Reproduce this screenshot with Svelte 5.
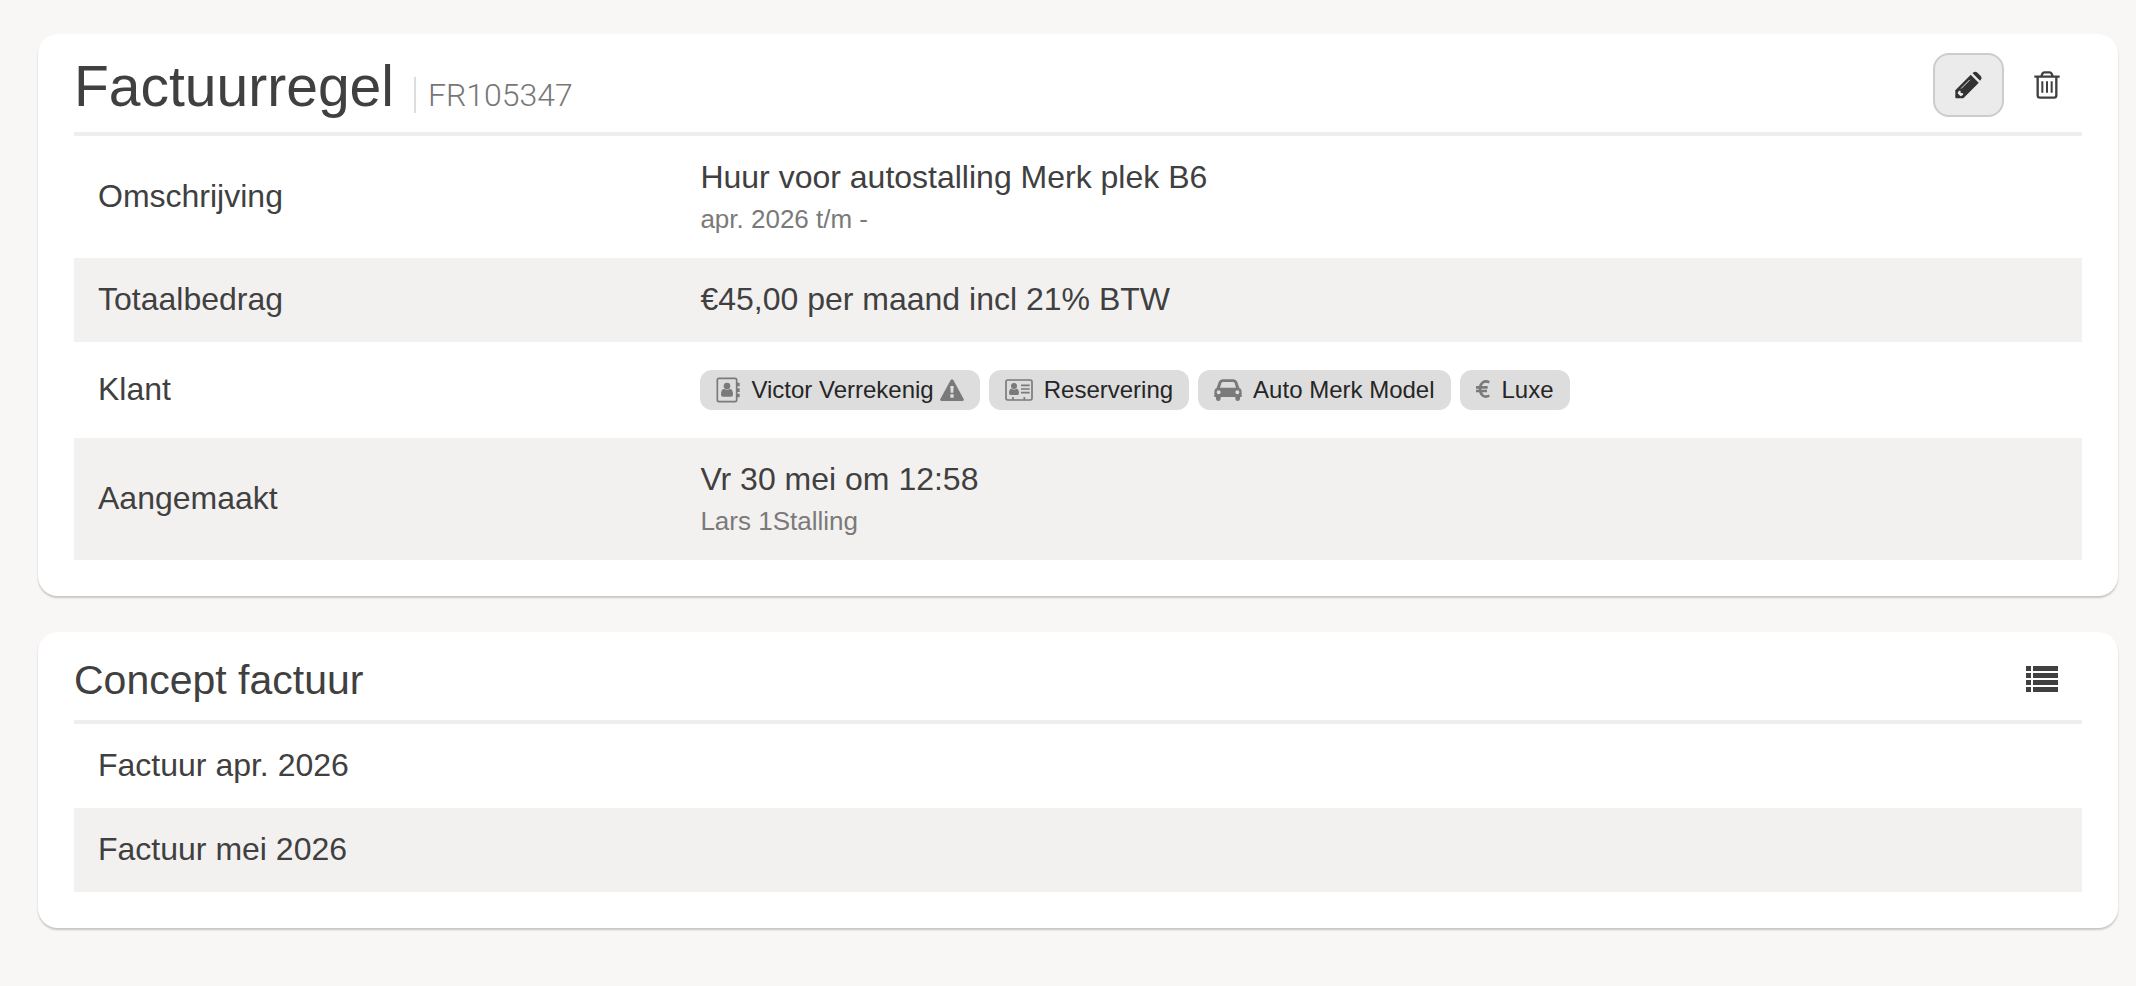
<script>
  const invoices = ['Factuur apr. 2026', 'Factuur mei 2026'];
  const tags = [
    { icon: 'contact', label: 'Victor Verrekenig', warn: true },
    { icon: 'card', label: 'Reservering' },
    { icon: 'car', label: 'Auto Merk Model' },
    { icon: 'euro', label: 'Luxe' }
  ];
</script>

{#snippet tagIcon(name)}
  {#if name === 'contact'}
    <svg width="24" height="26" viewBox="0 0 72 78" aria-hidden="true">
      <rect x="4" y="4" width="58" height="70" rx="5" fill="none" stroke="currentColor" stroke-width="5" />
      <path d="M63 17h8v11h-8zM63 34h8v11h-8zM63 50h8v11h-8z" fill="currentColor" />
      <circle cx="33" cy="27" r="10" fill="currentColor" />
      <path d="M15 53q0-17 9-17q9 5 18 0q9 0 9 17q0 6-6 6H21q-6 0-6-6z" fill="currentColor" />
    </svg>
  {:else if name === 'card'}
    <svg width="28" height="22" viewBox="0 0 84 66" aria-hidden="true">
      <rect x="3" y="3" width="78" height="60" rx="5" fill="none" stroke="currentColor" stroke-width="5" />
      <circle cx="27" cy="21" r="9" fill="currentColor" />
      <path d="M12 43q0-14 8-14q7 5 14 0q8 0 8 14q0 5-5 5H17q-5 0-5-5z" fill="currentColor" />
      <path d="M48 19h26M48 30h26M48 41h26M24 54v8M58 54v8" stroke="currentColor" stroke-width="5" />
    </svg>
  {:else if name === 'car'}
    <svg width="28" height="22" viewBox="0 0 84 66" aria-hidden="true">
      <path fill="currentColor" fill-rule="evenodd" d="M26 1h32q9 0 12 8l6 18q7 2 7 11v16h-5v5q0 7-7 7t-7-7v-5H20v5q0 7-7 7t-7-7v-5H1V38q0-9 7-11l6-18q3-8 12-8zM28 9q-5 0-6 4l-4 13h48l-4-13q-1-4-6-4zM14 34a6 6 0 1 0 0 12a6 6 0 0 0 0-12zM70 34a6 6 0 1 0 0 12a6 6 0 0 0 0-12z" />
    </svg>
  {:else}
    <svg class="euro" width="15" height="20" viewBox="0 0 45 60" aria-hidden="true">
      <path d="M40 7C24-1 12 10 12 27S24 55 40 47M0 22h35M0 33h33" fill="none" stroke="currentColor" stroke-width="8" />
    </svg>
  {/if}
{/snippet}

<main>
  <section class="card">
    <header class="main-header">
      <h1>Factuurregel</h1>
      <span class="code">FR105347</span>
      <div class="actions">
        <button class="edit" type="button" aria-label="Bewerken">
          <svg width="28" height="28" viewBox="0 0 84 84" aria-hidden="true">
            <path fill="currentColor" d="M1 58L49 10L74 35L26 83H4q-3 0-3-3z" />
            <path fill="currentColor" d="M54 5l3-2q6-5 12 0l11 11q5 6 0 12l-2 3z" />
            <path d="M51 8L76 33" stroke="#ebebeb" stroke-width="4" />
            <path d="M19 53L46 26" stroke="#ebebeb" stroke-width="3" />
            <path fill="#ebebeb" d="M12 60l5 0l1 7l7 1l0 5l-8 4l-9-9z" />
          </svg>
        </button>
        <button class="plain" type="button" aria-label="Verwijderen">
          <svg width="26" height="28" viewBox="0 0 78 84" aria-hidden="true">
            <path fill="none" stroke="currentColor" stroke-width="7" d="M1 17h76M22 16l3-8q2-4 6-4h16q4 0 6 4l3 8M11 18v55q0 7 7 7h42q7 0 7-7V18" />
            <path stroke="currentColor" stroke-width="6" d="M25 31v34M39 31v34M53 31v34" />
          </svg>
        </button>
      </div>
    </header>
    <table>
      <tbody>
        <tr>
          <th scope="row">Omschrijving</th>
          <td>Huur voor autostalling Merk plek B6<small>apr. 2026 t/m -</small></td>
        </tr>
        <tr>
          <th scope="row">Totaalbedrag</th>
          <td>€45,00 per maand incl 21% BTW</td>
        </tr>
        <tr>
          <th scope="row">Klant</th>
          <td>
            <div class="tags">
              {#each tags as tag}
                <a class="tag" href="#{tag.icon}">
                  {@render tagIcon(tag.icon)}
                  <span>{tag.label}</span>
                  {#if tag.warn}
                    <svg class="warn" width="24" height="22" viewBox="0 0 72 66" aria-hidden="true">
                      <path fill="currentColor" d="M32 3q4-5 8 0l31 57q2 6-4 6H5q-6 0-4-6z" />
                      <path fill="#ddd" d="M31 21h10l-1 20h-8zM31 46h10v10H31z" />
                    </svg>
                  {/if}
                </a>
              {/each}
            </div>
          </td>
        </tr>
        <tr>
          <th scope="row">Aangemaakt</th>
          <td>Vr 30 mei om 12:58<small>Lars 1Stalling</small></td>
        </tr>
      </tbody>
    </table>
  </section>

  <section class="card">
    <header>
      <h2>Concept factuur</h2>
      <div class="actions">
        <button class="list" type="button" aria-label="Lijst">
          <svg width="32" height="26" viewBox="0 0 32 26" aria-hidden="true">
            <path fill="currentColor" d="M0 0h5v5H0zM7 0h25v5H7zM0 7h5v5H0zM7 7h25v5H7zM0 14h5v5H0zM7 14h25v5H7zM0 21h5v5H0zM7 21h25v5H7z" />
          </svg>
        </button>
      </div>
    </header>
    <ul>
      {#each invoices as invoice}
        <li>{invoice}</li>
      {/each}
    </ul>
  </section>
</main>

<style>
  :global(body) {
    background: #f8f7f5;
  }
  main {
    display: flex;
    flex-direction: column;
    gap: 36px;
    padding: 34px 18px 36px 38px;
    font-family: "Liberation Sans", Arial, sans-serif;
    font-size: 32px;
    line-height: 36px;
    color: #404040;
  }
  .card {
    padding: 0 36px 36px;
    background: #fff;
    border-radius: 20px;
    box-shadow: 0 2px 2px rgba(0, 0, 0, 0.2);
  }
  header {
    display: flex;
    align-items: center;
    box-sizing: border-box;
    min-height: 92px;
    padding-top: 6px;
    border-bottom: 4px solid #eee;
  }
  .main-header {
    min-height: 102px;
    padding-top: 4px;
  }
  h1, h2 {
    margin: 0;
    padding-top: 2px;
    font-weight: 400;
  }
  h1 {
    font-size: 57px;
    line-height: 64px;
  }
  h2 {
    font-size: 41px;
    line-height: 48px;
  }
  .code {
    margin: 20px 0 0 20px;
    padding-left: 12px;
    border-left: 2px solid #ddd;
    font-family: Roboto, "Liberation Sans", sans-serif;
    font-weight: 300;
    color: #777;
  }
  .actions {
    display: flex;
    align-items: center;
    gap: 8px;
    margin-left: auto;
  }
  button {
    display: flex;
    align-items: center;
    justify-content: center;
    box-sizing: border-box;
    height: 64px;
    padding: 0 20px;
    border: 2px solid transparent;
    border-radius: 16px;
    background: none;
    color: #404040;
  }
  .list {
    padding: 0 22px;
  }
  .edit {
    width: 71px;
    border-color: #ccc;
    background: #ebebeb;
    color: #333;
  }
  table {
    width: 100%;
    border-collapse: collapse;
  }
  th, td {
    padding: 23px 24px 25px;
    font-weight: 400;
    text-align: left;
    vertical-align: middle;
  }
  th {
    width: 30%;
    box-sizing: border-box;
  }
  tr:nth-child(even), li:nth-child(even) {
    background: #f3f1f0;
  }
  small {
    display: block;
    margin-top: 10px;
    font-size: 26px;
    line-height: 28px;
    color: #7a7a7a;
  }
  .tags {
    display: flex;
    flex-wrap: wrap;
    gap: 9px;
    padding: 5px 0 3px;
  }
  .tag {
    display: flex;
    align-items: center;
    gap: 11px;
    height: 40px;
    padding: 0 16px;
    border-radius: 12px;
    background: #ddd;
    font-size: 24px;
    color: #262626;
    text-decoration: none;
  }
  .tag svg {
    flex: none;
    color: #7a7a7a;
  }
  .tag .warn {
    margin-left: -5px;
  }
  ul {
    margin: 0;
    padding: 0;
    list-style: none;
  }
  li {
    padding: 23px 24px 25px;
  }
</style>
